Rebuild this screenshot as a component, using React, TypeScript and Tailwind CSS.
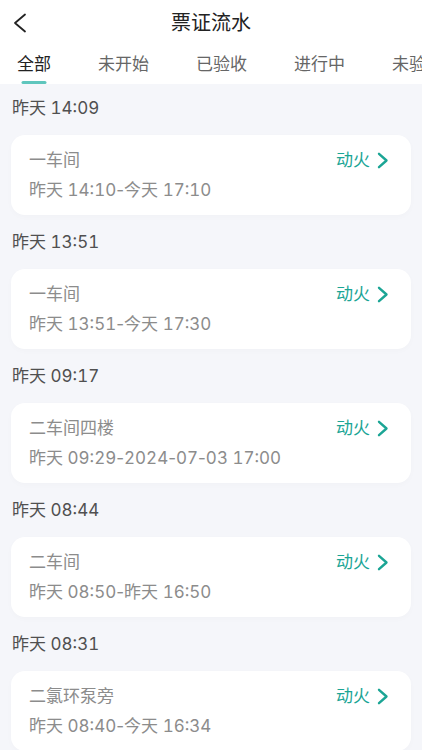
import React from "react";

const groups = [
  { label: "昨天 14:09", title: "一车间", time: "昨天 14:10-今天 17:10" },
  { label: "昨天 13:51", title: "一车间", time: "昨天 13:51-今天 17:30" },
  { label: "昨天 09:17", title: "二车间四楼", time: "昨天 09:29-2024-07-03 17:00" },
  { label: "昨天 08:44", title: "二车间", time: "昨天 08:50-昨天 16:50" },
  { label: "昨天 08:31", title: "二氯环泵旁", time: "昨天 08:40-今天 16:34" },
];

const tabs = ["全部", "未开始", "已验收", "进行中", "未验收"];

const font = { fontFamily: 'Inter, "Noto Sans CJK SC", sans-serif' };

function TimeText({ text }: { text: string }) {
  const parts = text.split("-");
  return (
    <>
      {parts.map((p, i) => (
        <React.Fragment key={i}>
          {i > 0 && <span className="normal-nums">-</span>}
          {p}
        </React.Fragment>
      ))}
    </>
  );
}

export default function App() {
  return (
    <div className="w-[422px] h-[750px] overflow-hidden bg-[#f5f6fa] flex flex-col tabular-nums" style={font}>
      <div className="bg-white">
        <div className="h-[46px] relative flex items-center justify-center">
          <svg className="absolute left-[12px] top-[13px]" width="16" height="20" viewBox="0 0 16 20" fill="none">
            <path d="M13 1.5 L3 10 L13 18.5" stroke="#222" strokeWidth="1.8" strokeLinecap="round" strokeLinejoin="round" />
          </svg>
          <span className="text-[20px] text-[#222] leading-none">票证流水</span>
        </div>
        <div className="h-[38px] flex items-start pl-[17px] gap-[47px] whitespace-nowrap overflow-hidden">
          {tabs.map((t, i) => (
            <div key={t} className="relative h-[38px] flex items-center shrink-0">
              <span className={i === 0 ? "text-[17px] text-[#222]" : "text-[17px] text-[#666]"}>{t}</span>
              {i === 0 && (
                <div className="absolute left-1/2 -translate-x-1/2 bottom-0 w-[25px] h-[3px] rounded-full bg-[#5fc6bd]" />
              )}
            </div>
          ))}
        </div>
      </div>
      <div className="flex flex-col px-[11px]">
        {groups.map((g, i) => (
          <div key={i} className="flex flex-col">
            <div className={i === 0 ? "pt-[12px] pb-[15px] pl-[1px] text-[17px] leading-[24px] text-[#505050]" : "pt-[15px] pb-[15px] pl-[1px] text-[17px] leading-[24px] text-[#505050]"}>
              {g.label}
            </div>
            <div className="bg-white rounded-[14px] h-[80px] pl-[18px] pr-[22px] py-[13px] flex flex-col gap-[6px] shadow-[0_2px_6px_rgba(0,0,0,0.02)]">
              <div className="flex items-center justify-between h-[24px]">
                <span className="text-[17px] text-[#8c8c8c] leading-[24px]">{g.title}</span>
                <div className="flex items-center gap-[7px]">
                  <span className="text-[17px] text-[#1ba595] leading-[24px]">动火</span>
                  <svg width="12" height="17" viewBox="0 0 12 17" fill="none">
                    <path d="M2 1.8 L9.5 8.5 L2 15.2" stroke="#1ba595" strokeWidth="2.4" strokeLinecap="round" strokeLinejoin="round" />
                  </svg>
                </div>
              </div>
              <div className="text-[17px] text-[#8c8c8c] leading-[24px] whitespace-nowrap">
                <TimeText text={g.time} />
              </div>
            </div>
          </div>
        ))}
      </div>
    </div>
  );
}
